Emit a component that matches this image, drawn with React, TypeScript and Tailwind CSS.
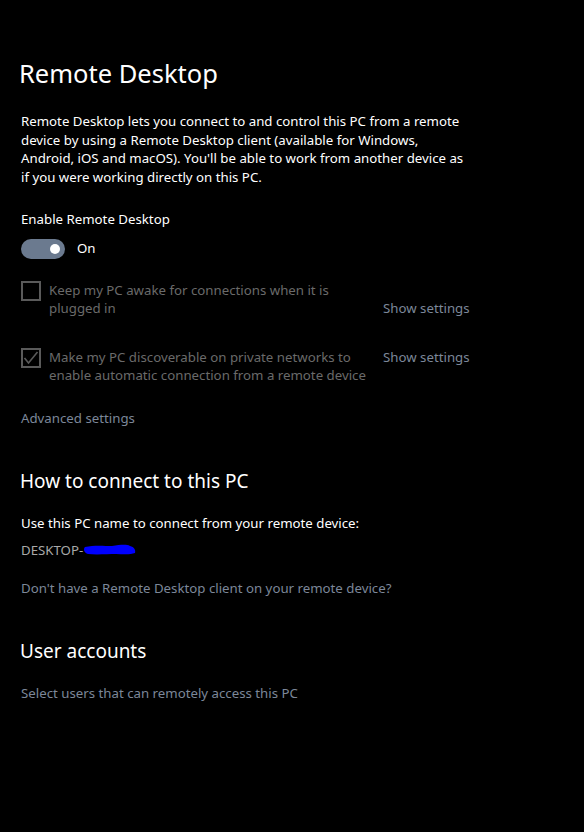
function Toggle({ on }: { on: boolean }) {
  return (
    <div className="flex items-center gap-3">
      <div className="flex h-5 w-11 items-center justify-end rounded-full bg-[#6b7a8f] px-[5px]">
        <div className="h-[10px] w-[10px] rounded-full bg-white" />
      </div>
      <span className="text-[13.25px] text-white">{on ? 'On' : 'Off'}</span>
    </div>
  );
}

function CheckRow({ checked, lines, top }: { checked: boolean; lines: string[]; top: string }) {
  return (
    <div className="flex items-start">
      <div className="relative h-5 w-5 shrink-0 border-2 border-[#5a5a5a]">
        {checked ? (
          <svg width="16" height="16" viewBox="0 0 16 16" className="absolute left-0 top-0">
            <polyline points="1.5,8 5.5,13 14.5,2" fill="none" stroke="#5a5a5a" strokeWidth="1.6" />
          </svg>
        ) : null}
      </div>
      <div className="ml-2 w-[334px] shrink-0 whitespace-nowrap text-[13.25px] leading-[18px] text-[#6a6a6a]">
        {lines.map((l) => (
          <div key={l}>{l}</div>
        ))}
      </div>
      <div className={`whitespace-nowrap text-[13.25px] leading-[18px] text-[#7c8799] ${top}`}>Show settings</div>
    </div>
  );
}

export default function App() {
  return (
    <div
      className="min-h-[832px] w-[584px] bg-black px-[21px] pt-[54px] text-white"
      style={{ fontFamily: '"Noto Sans", "Open Sans", sans-serif' }}
    >
      <h1 className="-ml-[2px] text-[25.5px] leading-[38px] font-normal">Remote Desktop</h1>

      <div className="mt-[20px] text-[13.25px] leading-[18.5px]">
        <div>Remote Desktop lets you connect to and control this PC from a remote</div>
        <div>device by using a Remote Desktop client (available for Windows,</div>
        <div>Android, iOS and macOS). You'll be able to work from another device as</div>
        <div>if you were working directly on this PC.</div>
      </div>

      <div className="mt-[24px] text-[13.25px] leading-[18px]">Enable Remote Desktop</div>
      <div className="mt-[11px]">
        <Toggle on />
      </div>

      <div className="mt-[22px]">
        <CheckRow
          checked={false}
          top="mt-[18px]"
          lines={['Keep my PC awake for connections when it is', 'plugged in']}
        />
      </div>
      <div className="mt-[31px]">
        <CheckRow
          checked
          top=""
          lines={['Make my PC discoverable on private networks to', 'enable automatic connection from a remote device']}
        />
      </div>

      <div className="mt-[25px] text-[13.25px] leading-[18px] text-[#7c8799]">Advanced settings</div>

      <h2 className="-ml-[1px] mt-[41px] text-[19px] leading-[26px] font-normal">How to connect to this PC</h2>

      <div className="mt-[20px] text-[13.25px] leading-[18px]">Use this PC name to connect from your remote device:</div>
      <div className="mt-[9px] flex items-center text-[13.25px] leading-[18px] text-[#a8a8a8]">
        <span>DESKTOP-</span>
        <svg width="56" height="16" viewBox="0 0 56 16" className="-ml-[1px]">
          <path
            d="M3 5 C12 3 22 4 30 4 C38 3 44 2 48 4 C52 5 54 8 53 11 C48 13 40 12 34 12 C26 12 14 13 6 12 C2 11 1 7 3 5 Z"
            fill="#0000ff"
          />
        </svg>
      </div>

      <div className="mt-[20px] text-[13.25px] leading-[18px] text-[#7c8799]">
        Don't have a Remote Desktop client on your remote device?
      </div>

      <h2 className="-ml-[1px] mt-[41px] text-[19px] leading-[26px] font-normal">User accounts</h2>

      <div className="mt-[20px] text-[13.25px] leading-[18px] text-[#7c8799]">
        Select users that can remotely access this PC
      </div>
    </div>
  );
}
